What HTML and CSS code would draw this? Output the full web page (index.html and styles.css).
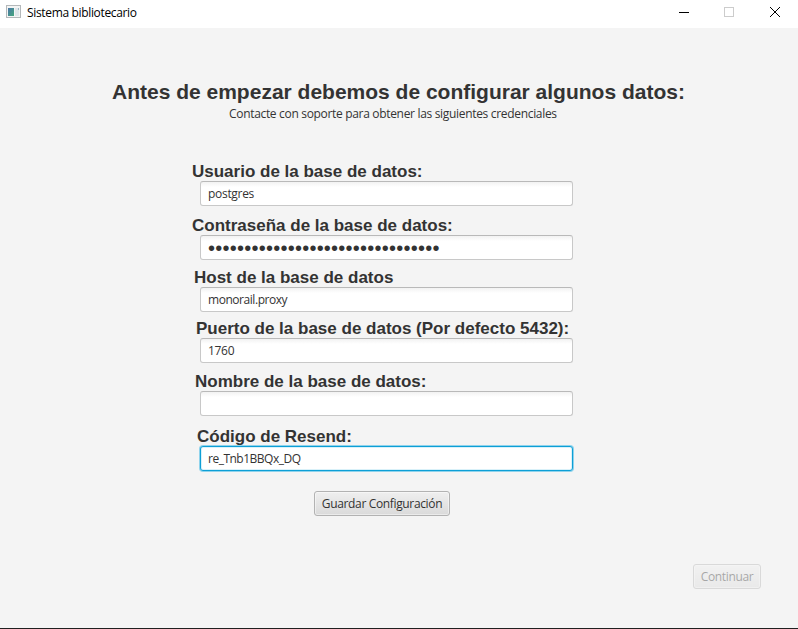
FILE: index.html
```html
<!DOCTYPE html>
<html lang="es">
<head>
<meta charset="utf-8">
<title>Sistema bibliotecario</title>
<link rel="stylesheet" href="styles.css">
</head>
<body>
<header class="titlebar">
  <svg class="app-icon" width="16" height="14" viewBox="0 0 16 14">
    <defs><linearGradient id="pane" x1="0" y1="0" x2="1" y2="1"><stop offset="0" stop-color="#4a76a8"/><stop offset="1" stop-color="#45a77c"/></linearGradient></defs>
    <rect x=".5" y=".5" width="14" height="12" fill="#f3f4f4" stroke="#b4b8ba"/>
    <rect x="2" y="3" width="6" height="8" fill="url(#pane)"/>
    <rect x="9" y="3" width="4" height="8" fill="#dfe6ea"/>
    <rect x="12" y="3" width="1" height="2" fill="#9bb7c4"/>
  </svg>
  <span class="app-name">Sistema bibliotecario</span>
  <div class="window-controls">
    <svg width="10" height="10" viewBox="0 0 10 10"><path d="M0 5.5H10" stroke="#000"/></svg>
    <svg width="10" height="10" viewBox="0 0 10 10"><rect x=".5" y=".5" width="9" height="9" fill="none" stroke="#ccc"/></svg>
    <svg width="11" height="10" viewBox="0 0 11 10"><path d="M1 0L11 10M11 0L1 10" stroke="#000"/></svg>
  </div>
</header>
<main class="content">
  <h1 class="heading">Antes de empezar debemos de configurar algunos datos:</h1>
  <p class="hint">Contacte con soporte para obtener las siguientes credenciales</p>
  <form class="form">
    <div class="field user"><label for="user">Usuario de la base de datos:</label><input id="user" value="postgres"></div>
    <div class="field password"><label for="password">Contraseña de la base de datos:</label><input id="password" value="••••••••••••••••••••••••••••••••"></div>
    <div class="field host"><label for="host">Host de la base de datos</label><input id="host" value="monorail.proxy"></div>
    <div class="field port"><label for="port">Puerto de la base de datos (Por defecto 5432):</label><input id="port" value="1760"></div>
    <div class="field name"><label for="name">Nombre de la base de datos:</label><input id="name" value=""></div>
    <div class="field code"><label for="code">Código de Resend:</label><input id="code" value="re_Tnb1BBQx_DQ"></div>
  </form>
  <button class="button save" type="button">Guardar Configuración</button>
  <button class="button next" type="button">Continuar</button>
</main>
</body>
</html>
```
FILE: styles.css
```css
* { box-sizing: border-box; }
body {
  margin: 0;
  height: 629px;
  display: flex;
  flex-direction: column;
  overflow: hidden;
  background: #f4f4f4;
  border-bottom: 1px solid #202020;
  color: #333;
  font: 12px "Open Sans", "Noto Sans", sans-serif;
}
.titlebar {
  flex: none;
  height: 28px;
  display: flex;
  align-items: center;
  padding: 0 18px 4px 6px;
  background: #fff;
  color: #000;
}
.app-name { margin-left: 5px; letter-spacing: -0.34px; line-height: 16px; padding-top: 1px; white-space: nowrap; }
.window-controls { display: flex; gap: 35px; margin-left: auto; }
.window-controls svg { display: block; overflow: visible; }
.content { flex: 1; display: flex; flex-direction: column; padding-top: 51px; }
.heading {
  margin: 0 0 0 112px;
  font: bold 21px/26px "Liberation Sans", Arial, sans-serif;
  white-space: nowrap;
}
.hint { height: 16px; margin: 0 0 0 229px; line-height: 17px; letter-spacing: -0.32px; white-space: nowrap; }
.form { width: 373px; margin: 40px 0 0 200px; }
.field { height: 45px; }
.field label {
  display: block;
  height: 20px;
  font: bold 17px/22px "Liberation Sans", Arial, sans-serif;
  white-space: nowrap;
}
.field input {
  display: block;
  width: 100%;
  height: 25px;
  padding: 0 7px 1px;
  border: 1px solid #c8c8c8;
  border-top-color: #b9b9b9;
  border-radius: 3px;
  outline: 0;
  background: linear-gradient(#f2f2f2, #fff 5px);
  color: #333;
  font: inherit;
  letter-spacing: -0.3px;
}
.user label, .password label { margin-left: -8px; }
.host label { margin-left: -6px; }
.port label { margin-left: -4px; }
.name label { margin-left: -5px; }
.code label { margin-left: -3px; }
.password { margin-top: 9px; }
.host { margin-top: 7px; }
.port { margin-top: 6px; }
.name { margin-top: 8px; }
.code { margin-top: 10px; }
.password input { padding: 1px 7px 0; font: 20px "Liberation Sans", Arial, sans-serif; letter-spacing: 0.24px; }
.host input { letter-spacing: -0.45px; }
.code input {
  border-color: #0d9fd6;
  background: #fff;
  box-shadow: 0 0 0 1px #8fd3ec, inset 0 0 0 1px #d9f1f9;
  letter-spacing: -0.5px;
}
.button {
  height: 25px;
  padding: 0;
  border: 1px solid #b2b2b2;
  border-radius: 3px;
  background: linear-gradient(#efefef, #dadada);
  box-shadow: inset 0 0 0 1px rgba(255, 255, 255, .45);
  color: #333;
  font: inherit;
  letter-spacing: -0.35px;
  white-space: nowrap;
}
.save { width: 136px; margin: 20px 0 0 314px; }
.next { width: 68px; margin: 48px 0 0 693px; opacity: .4; }
```
